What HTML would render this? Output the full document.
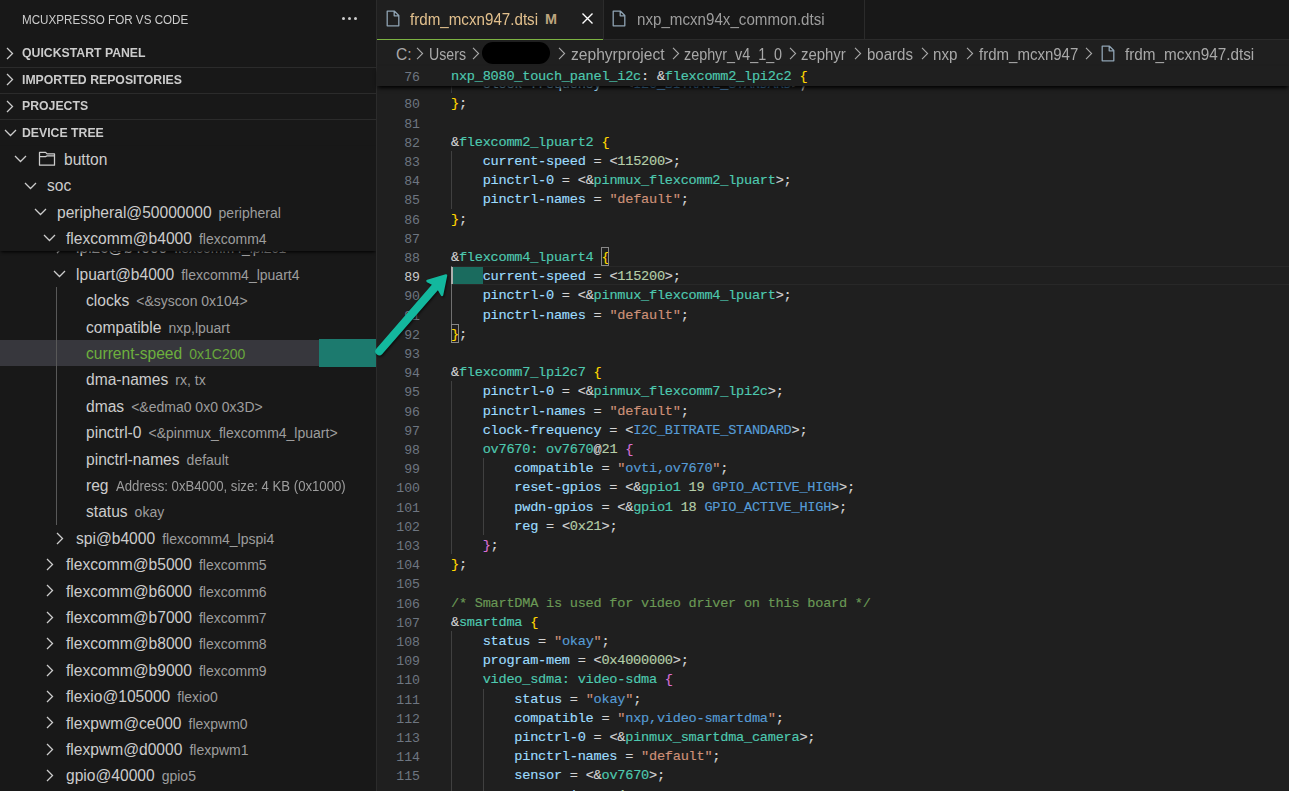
<!DOCTYPE html><html><head><meta charset="utf-8"><style>
html,body{margin:0;padding:0;width:1289px;height:791px;overflow:hidden;background:#1f1f1f;}
body{position:relative;font-family:"Liberation Sans",sans-serif;}
.a{position:absolute;white-space:pre;}
.ui{font-family:"Liberation Sans",sans-serif;}
.mono{font-family:"Liberation Mono",monospace;font-size:13.2px;}
.code{font-size:13.6px;letter-spacing:-0.24px;-webkit-text-stroke:0.15px currentColor;}
</style></head><body>
<div class="a" style="left:0;top:0;width:376px;height:791px;background:#181818;overflow:hidden">
<div class="a ui" style="left:22px;top:12px;font-size:13.2px;color:#cccccc;line-height:16px;transform:scaleX(0.883);transform-origin:0 0">MCUXPRESSO FOR VS CODE</div>
<div class="a" style="left:341.8px;top:16.9px;width:3.4px;height:3.4px;border-radius:50%;background:#cccccc"></div>
<div class="a" style="left:347.7px;top:16.9px;width:3.4px;height:3.4px;border-radius:50%;background:#cccccc"></div>
<div class="a" style="left:353.6px;top:16.9px;width:3.4px;height:3.4px;border-radius:50%;background:#cccccc"></div>
<svg style="position:absolute;left:6.3px;top:46.900000000000006px" width="8" height="13" viewBox="0 0 8 13"><path d="M1 1 L6.5 6.5 L1 12" fill="none" stroke="#cccccc" stroke-width="1.3"/></svg>
<div class="a ui" style="left:22px;top:45.400000000000006px;font-size:13.2px;font-weight:bold;color:#cccccc;line-height:16px;transform:scaleX(0.93);transform-origin:0 0">QUICKSTART PANEL</div>
<div class="a" style="left:0;top:66.6px;width:376px;height:1px;background:#2b2b2b"></div>
<svg style="position:absolute;left:6.3px;top:73.3px" width="8" height="13" viewBox="0 0 8 13"><path d="M1 1 L6.5 6.5 L1 12" fill="none" stroke="#cccccc" stroke-width="1.3"/></svg>
<div class="a ui" style="left:22px;top:71.8px;font-size:13.2px;font-weight:bold;color:#cccccc;line-height:16px;transform:scaleX(0.93);transform-origin:0 0">IMPORTED REPOSITORIES</div>
<div class="a" style="left:0;top:93.0px;width:376px;height:1px;background:#2b2b2b"></div>
<svg style="position:absolute;left:6.3px;top:99.7px" width="8" height="13" viewBox="0 0 8 13"><path d="M1 1 L6.5 6.5 L1 12" fill="none" stroke="#cccccc" stroke-width="1.3"/></svg>
<div class="a ui" style="left:22px;top:98.2px;font-size:13.2px;font-weight:bold;color:#cccccc;line-height:16px;transform:scaleX(0.93);transform-origin:0 0">PROJECTS</div>
<div class="a" style="left:0;top:119.39999999999999px;width:376px;height:1px;background:#2b2b2b"></div>
<svg style="position:absolute;left:3.5px;top:128.6px" width="13" height="8" viewBox="0 0 13 8"><path d="M1 1 L6.5 6.5 L12 1" fill="none" stroke="#cccccc" stroke-width="1.3"/></svg>
<div class="a ui" style="left:22px;top:124.6px;font-size:13.2px;font-weight:bold;color:#cccccc;line-height:16px;transform:scaleX(0.93);transform-origin:0 0">DEVICE TREE</div>
<svg style="position:absolute;left:56px;top:241.1px" width="8" height="13" viewBox="0 0 8 13"><path d="M1 1 L6.5 6.5 L1 12" fill="none" stroke="#cccccc" stroke-width="1.3"/></svg><div class="a ui" style="left:76px;top:235.4px;height:26.4px;line-height:26.4px;font-size:15.6px;color:#cccccc">lpi2c@b4000<span style="font-size:14px;color:#9d9d9d;margin-left:7px">flexcomm4_lpi2c1</span></div>
<svg style="position:absolute;left:53px;top:270.0px" width="13" height="8" viewBox="0 0 13 8"><path d="M1 1 L6.5 6.5 L12 1" fill="none" stroke="#cccccc" stroke-width="1.3"/></svg><div class="a ui" style="left:76px;top:261.8px;height:26.4px;line-height:26.4px;font-size:15.6px;color:#cccccc">lpuart@b4000<span style="font-size:14px;color:#9d9d9d;margin-left:7px">flexcomm4_lpuart4</span></div>
<div class="a ui" style="left:86px;top:288.2px;height:26.4px;line-height:26.4px;font-size:15.6px;color:#cccccc">clocks<span style="font-size:14px;color:#9d9d9d;margin-left:7px">&lt;&amp;syscon 0x104&gt;</span></div>
<div class="a ui" style="left:86px;top:314.6px;height:26.4px;line-height:26.4px;font-size:15.6px;color:#cccccc">compatible<span style="font-size:14px;color:#9d9d9d;margin-left:7px">nxp,lpuart</span></div>
<div class="a" style="left:0;top:340.0px;width:376px;height:26.4px;background:#37373d"></div>
<div class="a ui" style="left:86px;top:341.0px;height:26.4px;line-height:26.4px;font-size:15.6px;color:#6db03e">current-speed<span style="font-size:14px;color:#68a63c;margin-left:7px">0x1C200</span></div>
<div class="a" style="left:319px;top:339.2px;width:57px;height:28px;background:#1c7a6e"></div>
<div class="a ui" style="left:86px;top:367.4px;height:26.4px;line-height:26.4px;font-size:15.6px;color:#cccccc">dma-names<span style="font-size:14px;color:#9d9d9d;margin-left:7px">rx, tx</span></div>
<div class="a ui" style="left:86px;top:393.8px;height:26.4px;line-height:26.4px;font-size:15.6px;color:#cccccc">dmas<span style="font-size:14px;color:#9d9d9d;margin-left:7px">&lt;&amp;edma0 0x0 0x3D&gt;</span></div>
<div class="a ui" style="left:86px;top:420.2px;height:26.4px;line-height:26.4px;font-size:15.6px;color:#cccccc">pinctrl-0<span style="font-size:14px;color:#9d9d9d;margin-left:7px">&lt;&amp;pinmux_flexcomm4_lpuart&gt;</span></div>
<div class="a ui" style="left:86px;top:446.6px;height:26.4px;line-height:26.4px;font-size:15.6px;color:#cccccc">pinctrl-names<span style="font-size:14px;color:#9d9d9d;margin-left:7px">default</span></div>
<div class="a ui" style="left:86px;top:473.0px;height:26.4px;line-height:26.4px;font-size:15.6px;color:#cccccc">reg<span style="font-size:14px;color:#9d9d9d;margin-left:7px;display:inline-block;transform:scaleX(0.94);transform-origin:0 50%">Address: 0xB4000, size: 4 KB (0x1000)</span></div>
<div class="a ui" style="left:86px;top:499.4px;height:26.4px;line-height:26.4px;font-size:15.6px;color:#cccccc">status<span style="font-size:14px;color:#9d9d9d;margin-left:7px">okay</span></div>
<svg style="position:absolute;left:56px;top:531.5px" width="8" height="13" viewBox="0 0 8 13"><path d="M1 1 L6.5 6.5 L1 12" fill="none" stroke="#cccccc" stroke-width="1.3"/></svg><div class="a ui" style="left:76px;top:525.8px;height:26.4px;line-height:26.4px;font-size:15.6px;color:#cccccc">spi@b4000<span style="font-size:14px;color:#9d9d9d;margin-left:7px">flexcomm4_lpspi4</span></div>
<svg style="position:absolute;left:46px;top:557.9000000000001px" width="8" height="13" viewBox="0 0 8 13"><path d="M1 1 L6.5 6.5 L1 12" fill="none" stroke="#cccccc" stroke-width="1.3"/></svg><div class="a ui" style="left:66px;top:552.2px;height:26.4px;line-height:26.4px;font-size:15.6px;color:#cccccc">flexcomm@b5000<span style="font-size:14px;color:#9d9d9d;margin-left:7px">flexcomm5</span></div>
<svg style="position:absolute;left:46px;top:584.3px" width="8" height="13" viewBox="0 0 8 13"><path d="M1 1 L6.5 6.5 L1 12" fill="none" stroke="#cccccc" stroke-width="1.3"/></svg><div class="a ui" style="left:66px;top:578.5999999999999px;height:26.4px;line-height:26.4px;font-size:15.6px;color:#cccccc">flexcomm@b6000<span style="font-size:14px;color:#9d9d9d;margin-left:7px">flexcomm6</span></div>
<svg style="position:absolute;left:46px;top:610.7px" width="8" height="13" viewBox="0 0 8 13"><path d="M1 1 L6.5 6.5 L1 12" fill="none" stroke="#cccccc" stroke-width="1.3"/></svg><div class="a ui" style="left:66px;top:605.0px;height:26.4px;line-height:26.4px;font-size:15.6px;color:#cccccc">flexcomm@b7000<span style="font-size:14px;color:#9d9d9d;margin-left:7px">flexcomm7</span></div>
<svg style="position:absolute;left:46px;top:637.1px" width="8" height="13" viewBox="0 0 8 13"><path d="M1 1 L6.5 6.5 L1 12" fill="none" stroke="#cccccc" stroke-width="1.3"/></svg><div class="a ui" style="left:66px;top:631.4px;height:26.4px;line-height:26.4px;font-size:15.6px;color:#cccccc">flexcomm@b8000<span style="font-size:14px;color:#9d9d9d;margin-left:7px">flexcomm8</span></div>
<svg style="position:absolute;left:46px;top:663.5px" width="8" height="13" viewBox="0 0 8 13"><path d="M1 1 L6.5 6.5 L1 12" fill="none" stroke="#cccccc" stroke-width="1.3"/></svg><div class="a ui" style="left:66px;top:657.8px;height:26.4px;line-height:26.4px;font-size:15.6px;color:#cccccc">flexcomm@b9000<span style="font-size:14px;color:#9d9d9d;margin-left:7px">flexcomm9</span></div>
<svg style="position:absolute;left:46px;top:689.9000000000001px" width="8" height="13" viewBox="0 0 8 13"><path d="M1 1 L6.5 6.5 L1 12" fill="none" stroke="#cccccc" stroke-width="1.3"/></svg><div class="a ui" style="left:66px;top:684.2px;height:26.4px;line-height:26.4px;font-size:15.6px;color:#cccccc">flexio@105000<span style="font-size:14px;color:#9d9d9d;margin-left:7px">flexio0</span></div>
<svg style="position:absolute;left:46px;top:716.3px" width="8" height="13" viewBox="0 0 8 13"><path d="M1 1 L6.5 6.5 L1 12" fill="none" stroke="#cccccc" stroke-width="1.3"/></svg><div class="a ui" style="left:66px;top:710.5999999999999px;height:26.4px;line-height:26.4px;font-size:15.6px;color:#cccccc">flexpwm@ce000<span style="font-size:14px;color:#9d9d9d;margin-left:7px">flexpwm0</span></div>
<svg style="position:absolute;left:46px;top:742.7px" width="8" height="13" viewBox="0 0 8 13"><path d="M1 1 L6.5 6.5 L1 12" fill="none" stroke="#cccccc" stroke-width="1.3"/></svg><div class="a ui" style="left:66px;top:737.0px;height:26.4px;line-height:26.4px;font-size:15.6px;color:#cccccc">flexpwm@d0000<span style="font-size:14px;color:#9d9d9d;margin-left:7px">flexpwm1</span></div>
<svg style="position:absolute;left:46px;top:769.1px" width="8" height="13" viewBox="0 0 8 13"><path d="M1 1 L6.5 6.5 L1 12" fill="none" stroke="#cccccc" stroke-width="1.3"/></svg><div class="a ui" style="left:66px;top:763.4px;height:26.4px;line-height:26.4px;font-size:15.6px;color:#cccccc">gpio@40000<span style="font-size:14px;color:#9d9d9d;margin-left:7px">gpio5</span></div>
<div class="a" style="left:56px;top:287.2px;width:1px;height:237.6px;background:#585858"></div>
<div class="a" style="left:0;top:146px;width:376px;height:104.6px;background:#181818;box-shadow:0 2px 3px -1px #000;overflow:hidden"></div>
<svg style="position:absolute;left:14px;top:155.2px" width="13" height="8" viewBox="0 0 13 8"><path d="M1 1 L6.5 6.5 L12 1" fill="none" stroke="#cccccc" stroke-width="1.3"/></svg><svg style="position:absolute;left:36px;top:150.2px" width="22" height="18" viewBox="36 150.2 22 18"><path d="M39.5 152.6 H45.6 L47.1 154.1 H54.5 V165.39999999999998 H39.5 Z M39.5 156.79999999999998 H45.6 L47.1 156.0 H54.5" fill="none" stroke="#cccccc" stroke-width="1.25" stroke-linejoin="round"/></svg><div class="a ui" style="left:64px;top:147.0px;height:26.4px;line-height:26.4px;font-size:15.6px;color:#cccccc">button</div>
<svg style="position:absolute;left:24px;top:181.6px" width="13" height="8" viewBox="0 0 13 8"><path d="M1 1 L6.5 6.5 L12 1" fill="none" stroke="#cccccc" stroke-width="1.3"/></svg><div class="a ui" style="left:47px;top:173.4px;height:26.4px;line-height:26.4px;font-size:15.6px;color:#cccccc">soc</div>
<svg style="position:absolute;left:34px;top:208.0px" width="13" height="8" viewBox="0 0 13 8"><path d="M1 1 L6.5 6.5 L12 1" fill="none" stroke="#cccccc" stroke-width="1.3"/></svg><div class="a ui" style="left:57px;top:199.8px;height:26.4px;line-height:26.4px;font-size:15.6px;color:#cccccc">peripheral@50000000<span style="font-size:14px;color:#9d9d9d;margin-left:7px">peripheral</span></div>
<svg style="position:absolute;left:43px;top:234.39999999999998px" width="13" height="8" viewBox="0 0 13 8"><path d="M1 1 L6.5 6.5 L12 1" fill="none" stroke="#cccccc" stroke-width="1.3"/></svg><div class="a ui" style="left:66px;top:226.2px;height:26.4px;line-height:26.4px;font-size:15.6px;color:#cccccc">flexcomm@b4000<span style="font-size:14px;color:#9d9d9d;margin-left:7px">flexcomm4</span></div>
</div>
<div class="a" style="left:376px;top:0;width:1px;height:791px;background:#2b2b2b"></div>
<div class="a" style="left:377px;top:0;width:912px;height:39px;background:#181818"></div>
<div class="a" style="left:377px;top:39px;width:912px;height:1px;background:#2b2b2b"></div>
<div class="a" style="left:377px;top:0;width:226px;height:40px;background:#1f1f1f"></div>
<div class="a" style="left:377px;top:39px;width:226px;height:1px;background:#7cb342"></div>
<div class="a" style="left:603px;top:0;width:1px;height:39px;background:#2b2b2b"></div>
<div class="a" style="left:864px;top:0;width:1px;height:39px;background:#2b2b2b"></div>
<svg style="position:absolute;left:386px;top:10px" width="14" height="17" viewBox="0 0 14 17"><path d="M1.2 1.2 H8.5 L12.8 5.5 V15.8 H1.2 Z M8.2 1.2 V5.8 H12.8" fill="none" stroke="#8fa3b3" stroke-width="1.3" stroke-linejoin="round"/></svg>
<div class="a ui" style="left:410px;top:11px;font-size:15.6px;line-height:18px;color:#e2c08d;transform:scaleX(0.972);transform-origin:0 0">frdm_mcxn947.dtsi</div>
<div class="a ui" style="left:545px;top:10px;font-size:14.4px;line-height:18px;font-weight:bold;color:#bda57f">M</div>
<svg style="position:absolute;left:581px;top:12px" width="13" height="13" viewBox="0 0 13 13"><path d="M1.5 1.5 L11.5 11.5 M11.5 1.5 L1.5 11.5" stroke="#ffffff" stroke-width="1.4"/></svg>
<svg style="position:absolute;left:612px;top:10px" width="14" height="17" viewBox="0 0 14 17"><path d="M1.2 1.2 H8.5 L12.8 5.5 V15.8 H1.2 Z M8.2 1.2 V5.8 H12.8" fill="none" stroke="#8fa3b3" stroke-width="1.3" stroke-linejoin="round"/></svg>
<div class="a ui" style="left:637px;top:11px;font-size:15.6px;line-height:18px;color:#9d9d9d;transform:scaleX(0.971);transform-origin:0 0">nxp_mcxn94x_common.dtsi</div>
<div class="a" style="left:377px;top:40px;width:912px;height:26px;background:#1f1f1f"></div>
<div class="a ui" style="left:396.1px;top:46px;font-size:15.6px;line-height:18px;color:#a9a9a9;transform:scaleX(1.0000);transform-origin:0 0">C:</div>
<div class="a ui" style="left:429.1px;top:46px;font-size:15.6px;line-height:18px;color:#a9a9a9;transform:scaleX(0.9083);transform-origin:0 0">Users</div>
<div class="a ui" style="left:570.7px;top:46px;font-size:15.6px;line-height:18px;color:#a9a9a9;transform:scaleX(0.9999);transform-origin:0 0">zephyrproject</div>
<div class="a ui" style="left:683.7px;top:46px;font-size:15.6px;line-height:18px;color:#a9a9a9;transform:scaleX(0.9199);transform-origin:0 0">zephyr_v4_1_0</div>
<div class="a ui" style="left:801px;top:46px;font-size:15.6px;line-height:18px;color:#a9a9a9;transform:scaleX(0.9570);transform-origin:0 0">zephyr</div>
<div class="a ui" style="left:867.4px;top:46px;font-size:15.6px;line-height:18px;color:#a9a9a9;transform:scaleX(0.9646);transform-origin:0 0">boards</div>
<div class="a ui" style="left:933px;top:46px;font-size:15.6px;line-height:18px;color:#a9a9a9;transform:scaleX(0.9739);transform-origin:0 0">nxp</div>
<div class="a ui" style="left:978.6px;top:46px;font-size:15.6px;line-height:18px;color:#a9a9a9;transform:scaleX(0.9628);transform-origin:0 0">frdm_mcxn947</div>
<div class="a ui" style="left:1125px;top:46px;font-size:15.6px;line-height:18px;color:#a9a9a9;transform:scaleX(0.9808);transform-origin:0 0">frdm_mcxn947.dtsi</div>
<svg style="position:absolute;left:415.5px;top:47px" width="8" height="13" viewBox="0 0 8 13"><path d="M1 0.8 L6.6 6.5 L1 12.2" fill="none" stroke="#a9a9a9" stroke-width="1.1"/></svg>
<svg style="position:absolute;left:472px;top:47px" width="8" height="13" viewBox="0 0 8 13"><path d="M1 0.8 L6.6 6.5 L1 12.2" fill="none" stroke="#a9a9a9" stroke-width="1.1"/></svg>
<svg style="position:absolute;left:557.5px;top:47px" width="8" height="13" viewBox="0 0 8 13"><path d="M1 0.8 L6.6 6.5 L1 12.2" fill="none" stroke="#a9a9a9" stroke-width="1.1"/></svg>
<svg style="position:absolute;left:671.7px;top:47px" width="8" height="13" viewBox="0 0 8 13"><path d="M1 0.8 L6.6 6.5 L1 12.2" fill="none" stroke="#a9a9a9" stroke-width="1.1"/></svg>
<svg style="position:absolute;left:789px;top:47px" width="8" height="13" viewBox="0 0 8 13"><path d="M1 0.8 L6.6 6.5 L1 12.2" fill="none" stroke="#a9a9a9" stroke-width="1.1"/></svg>
<svg style="position:absolute;left:853.8px;top:47px" width="8" height="13" viewBox="0 0 8 13"><path d="M1 0.8 L6.6 6.5 L1 12.2" fill="none" stroke="#a9a9a9" stroke-width="1.1"/></svg>
<svg style="position:absolute;left:920.8px;top:47px" width="8" height="13" viewBox="0 0 8 13"><path d="M1 0.8 L6.6 6.5 L1 12.2" fill="none" stroke="#a9a9a9" stroke-width="1.1"/></svg>
<svg style="position:absolute;left:965.5px;top:47px" width="8" height="13" viewBox="0 0 8 13"><path d="M1 0.8 L6.6 6.5 L1 12.2" fill="none" stroke="#a9a9a9" stroke-width="1.1"/></svg>
<svg style="position:absolute;left:1085px;top:47px" width="8" height="13" viewBox="0 0 8 13"><path d="M1 0.8 L6.6 6.5 L1 12.2" fill="none" stroke="#a9a9a9" stroke-width="1.1"/></svg>
<div class="a" style="left:482px;top:42px;width:68px;height:22px;border-radius:11px;background:#000"></div>
<svg style="position:absolute;left:1101px;top:45px" width="14" height="17" viewBox="0 0 14 17"><path d="M1.2 1.2 H8.5 L12.8 5.5 V15.8 H1.2 Z M8.2 1.2 V5.8 H12.8" fill="none" stroke="#8fa3b3" stroke-width="1.3" stroke-linejoin="round"/></svg>
<div class="a" style="left:451px;top:266.2px;width:838px;height:17.2px;border-top:1px solid #282828;border-bottom:1px solid #282828"></div>
<div class="a" style="left:451px;top:74.2px;width:1px;height:19.2px;background:#404040"></div>
<div class="a" style="left:451px;top:151.0px;width:1px;height:57.599999999999994px;background:#404040"></div>
<div class="a" style="left:451px;top:266.2px;width:1px;height:57.599999999999994px;background:#707070"></div>
<div class="a" style="left:451px;top:381.4px;width:1px;height:172.79999999999998px;background:#404040"></div>
<div class="a" style="left:483px;top:458.20000000000005px;width:1px;height:76.8px;background:#404040"></div>
<div class="a" style="left:451px;top:631.0px;width:1px;height:172.79999999999998px;background:#404040"></div>
<div class="a" style="left:483px;top:688.5999999999999px;width:1px;height:115.19999999999999px;background:#404040"></div>
<div class="a mono" style="left:380px;width:40px;text-align:right;top:95.4px;height:19.2px;line-height:19.2px;color:#6e7681">80</div>
<div class="a mono code" style="left:451px;top:94.4px;height:19.2px;line-height:19.2px;color:#d4d4d4"><span style="color:#ffd700">}</span><span style="color:#d4d4d4">;</span></div>
<div class="a mono" style="left:380px;width:40px;text-align:right;top:114.60000000000001px;height:19.2px;line-height:19.2px;color:#6e7681">81</div>
<div class="a mono" style="left:380px;width:40px;text-align:right;top:133.8px;height:19.2px;line-height:19.2px;color:#6e7681">82</div>
<div class="a mono code" style="left:451px;top:132.8px;height:19.2px;line-height:19.2px;color:#d4d4d4"><span style="color:#d4d4d4">&amp;</span><span style="color:#4ec9b0">flexcomm2_lpuart2</span><span style="color:#d4d4d4"> </span><span style="color:#ffd700">{</span></div>
<div class="a mono" style="left:380px;width:40px;text-align:right;top:153.0px;height:19.2px;line-height:19.2px;color:#6e7681">83</div>
<div class="a mono code" style="left:451px;top:152.0px;height:19.2px;line-height:19.2px;color:#d4d4d4">    <span style="color:#9cdcfe">current-speed</span><span style="color:#d4d4d4"> </span><span style="color:#d4d4d4">=</span><span style="color:#d4d4d4"> </span><span style="color:#d4d4d4">&lt;</span><span style="color:#b5cea8">115200</span><span style="color:#d4d4d4">&gt;</span><span style="color:#d4d4d4">;</span></div>
<div class="a mono" style="left:380px;width:40px;text-align:right;top:172.2px;height:19.2px;line-height:19.2px;color:#6e7681">84</div>
<div class="a mono code" style="left:451px;top:171.2px;height:19.2px;line-height:19.2px;color:#d4d4d4">    <span style="color:#9cdcfe">pinctrl-0</span><span style="color:#d4d4d4"> </span><span style="color:#d4d4d4">=</span><span style="color:#d4d4d4"> </span><span style="color:#d4d4d4">&lt;</span><span style="color:#d4d4d4">&amp;</span><span style="color:#4ec9b0">pinmux_flexcomm2_lpuart</span><span style="color:#d4d4d4">&gt;</span><span style="color:#d4d4d4">;</span></div>
<div class="a mono" style="left:380px;width:40px;text-align:right;top:191.4px;height:19.2px;line-height:19.2px;color:#6e7681">85</div>
<div class="a mono code" style="left:451px;top:190.4px;height:19.2px;line-height:19.2px;color:#d4d4d4">    <span style="color:#9cdcfe">pinctrl-names</span><span style="color:#d4d4d4"> </span><span style="color:#d4d4d4">=</span><span style="color:#d4d4d4"> </span><span style="color:#ce9178">&quot;</span><span style="color:#ce9178">default</span><span style="color:#ce9178">&quot;</span><span style="color:#d4d4d4">;</span></div>
<div class="a mono" style="left:380px;width:40px;text-align:right;top:210.6px;height:19.2px;line-height:19.2px;color:#6e7681">86</div>
<div class="a mono code" style="left:451px;top:209.6px;height:19.2px;line-height:19.2px;color:#d4d4d4"><span style="color:#ffd700">}</span><span style="color:#d4d4d4">;</span></div>
<div class="a mono" style="left:380px;width:40px;text-align:right;top:229.8px;height:19.2px;line-height:19.2px;color:#6e7681">87</div>
<div class="a mono" style="left:380px;width:40px;text-align:right;top:249.0px;height:19.2px;line-height:19.2px;color:#6e7681">88</div>
<div class="a mono code" style="left:451px;top:248.0px;height:19.2px;line-height:19.2px;color:#d4d4d4"><span style="color:#d4d4d4">&amp;</span><span style="color:#4ec9b0">flexcomm4_lpuart4</span><span style="color:#d4d4d4"> </span><span style="color:#ffd700">{</span></div>
<div class="a mono" style="left:380px;width:40px;text-align:right;top:268.2px;height:19.2px;line-height:19.2px;color:#cccccc">89</div>
<div class="a mono code" style="left:451px;top:267.2px;height:19.2px;line-height:19.2px;color:#d4d4d4">    <span style="color:#9cdcfe">current-speed</span><span style="color:#d4d4d4"> </span><span style="color:#d4d4d4">=</span><span style="color:#d4d4d4"> </span><span style="color:#d4d4d4">&lt;</span><span style="color:#b5cea8">115200</span><span style="color:#d4d4d4">&gt;</span><span style="color:#d4d4d4">;</span></div>
<div class="a mono" style="left:380px;width:40px;text-align:right;top:287.4px;height:19.2px;line-height:19.2px;color:#6e7681">90</div>
<div class="a mono code" style="left:451px;top:286.4px;height:19.2px;line-height:19.2px;color:#d4d4d4">    <span style="color:#9cdcfe">pinctrl-0</span><span style="color:#d4d4d4"> </span><span style="color:#d4d4d4">=</span><span style="color:#d4d4d4"> </span><span style="color:#d4d4d4">&lt;</span><span style="color:#d4d4d4">&amp;</span><span style="color:#4ec9b0">pinmux_flexcomm4_lpuart</span><span style="color:#d4d4d4">&gt;</span><span style="color:#d4d4d4">;</span></div>
<div class="a mono" style="left:380px;width:40px;text-align:right;top:306.6px;height:19.2px;line-height:19.2px;color:#6e7681">91</div>
<div class="a mono code" style="left:451px;top:305.6px;height:19.2px;line-height:19.2px;color:#d4d4d4">    <span style="color:#9cdcfe">pinctrl-names</span><span style="color:#d4d4d4"> </span><span style="color:#d4d4d4">=</span><span style="color:#d4d4d4"> </span><span style="color:#ce9178">&quot;</span><span style="color:#ce9178">default</span><span style="color:#ce9178">&quot;</span><span style="color:#d4d4d4">;</span></div>
<div class="a mono" style="left:380px;width:40px;text-align:right;top:325.79999999999995px;height:19.2px;line-height:19.2px;color:#6e7681">92</div>
<div class="a mono code" style="left:451px;top:324.79999999999995px;height:19.2px;line-height:19.2px;color:#d4d4d4"><span style="color:#ffd700">}</span><span style="color:#d4d4d4">;</span></div>
<div class="a mono" style="left:380px;width:40px;text-align:right;top:345.0px;height:19.2px;line-height:19.2px;color:#6e7681">93</div>
<div class="a mono" style="left:380px;width:40px;text-align:right;top:364.20000000000005px;height:19.2px;line-height:19.2px;color:#6e7681">94</div>
<div class="a mono code" style="left:451px;top:363.20000000000005px;height:19.2px;line-height:19.2px;color:#d4d4d4"><span style="color:#d4d4d4">&amp;</span><span style="color:#4ec9b0">flexcomm7_lpi2c7</span><span style="color:#d4d4d4"> </span><span style="color:#ffd700">{</span></div>
<div class="a mono" style="left:380px;width:40px;text-align:right;top:383.4px;height:19.2px;line-height:19.2px;color:#6e7681">95</div>
<div class="a mono code" style="left:451px;top:382.4px;height:19.2px;line-height:19.2px;color:#d4d4d4">    <span style="color:#9cdcfe">pinctrl-0</span><span style="color:#d4d4d4"> </span><span style="color:#d4d4d4">=</span><span style="color:#d4d4d4"> </span><span style="color:#d4d4d4">&lt;</span><span style="color:#d4d4d4">&amp;</span><span style="color:#4ec9b0">pinmux_flexcomm7_lpi2c</span><span style="color:#d4d4d4">&gt;</span><span style="color:#d4d4d4">;</span></div>
<div class="a mono" style="left:380px;width:40px;text-align:right;top:402.6px;height:19.2px;line-height:19.2px;color:#6e7681">96</div>
<div class="a mono code" style="left:451px;top:401.6px;height:19.2px;line-height:19.2px;color:#d4d4d4">    <span style="color:#9cdcfe">pinctrl-names</span><span style="color:#d4d4d4"> </span><span style="color:#d4d4d4">=</span><span style="color:#d4d4d4"> </span><span style="color:#ce9178">&quot;</span><span style="color:#ce9178">default</span><span style="color:#ce9178">&quot;</span><span style="color:#d4d4d4">;</span></div>
<div class="a mono" style="left:380px;width:40px;text-align:right;top:421.79999999999995px;height:19.2px;line-height:19.2px;color:#6e7681">97</div>
<div class="a mono code" style="left:451px;top:420.79999999999995px;height:19.2px;line-height:19.2px;color:#d4d4d4">    <span style="color:#9cdcfe">clock-frequency</span><span style="color:#d4d4d4"> </span><span style="color:#d4d4d4">=</span><span style="color:#d4d4d4"> </span><span style="color:#d4d4d4">&lt;</span><span style="color:#569cd6">I2C_BITRATE_STANDARD</span><span style="color:#d4d4d4">&gt;</span><span style="color:#d4d4d4">;</span></div>
<div class="a mono" style="left:380px;width:40px;text-align:right;top:441.0px;height:19.2px;line-height:19.2px;color:#6e7681">98</div>
<div class="a mono code" style="left:451px;top:440.0px;height:19.2px;line-height:19.2px;color:#d4d4d4">    <span style="color:#4ec9b0">ov7670</span><span style="color:#4ec9b0">:</span><span style="color:#d4d4d4"> </span><span style="color:#4ec9b0">ov7670</span><span style="color:#d4d4d4">@</span><span style="color:#b5cea8">21</span><span style="color:#d4d4d4"> </span><span style="color:#da70d6">{</span></div>
<div class="a mono" style="left:380px;width:40px;text-align:right;top:460.20000000000005px;height:19.2px;line-height:19.2px;color:#6e7681">99</div>
<div class="a mono code" style="left:451px;top:459.20000000000005px;height:19.2px;line-height:19.2px;color:#d4d4d4">        <span style="color:#9cdcfe">compatible</span><span style="color:#d4d4d4"> </span><span style="color:#d4d4d4">=</span><span style="color:#d4d4d4"> </span><span style="color:#ce9178">&quot;</span><span style="color:#569cd6">ovti,ov7670</span><span style="color:#ce9178">&quot;</span><span style="color:#d4d4d4">;</span></div>
<div class="a mono" style="left:380px;width:40px;text-align:right;top:479.4px;height:19.2px;line-height:19.2px;color:#6e7681">100</div>
<div class="a mono code" style="left:451px;top:478.4px;height:19.2px;line-height:19.2px;color:#d4d4d4">        <span style="color:#9cdcfe">reset-gpios</span><span style="color:#d4d4d4"> </span><span style="color:#d4d4d4">=</span><span style="color:#d4d4d4"> </span><span style="color:#d4d4d4">&lt;</span><span style="color:#d4d4d4">&amp;</span><span style="color:#4ec9b0">gpio1</span><span style="color:#d4d4d4"> </span><span style="color:#b5cea8">19</span><span style="color:#d4d4d4"> </span><span style="color:#569cd6">GPIO_ACTIVE_HIGH</span><span style="color:#d4d4d4">&gt;</span><span style="color:#d4d4d4">;</span></div>
<div class="a mono" style="left:380px;width:40px;text-align:right;top:498.6px;height:19.2px;line-height:19.2px;color:#6e7681">101</div>
<div class="a mono code" style="left:451px;top:497.6px;height:19.2px;line-height:19.2px;color:#d4d4d4">        <span style="color:#9cdcfe">pwdn-gpios</span><span style="color:#d4d4d4"> </span><span style="color:#d4d4d4">=</span><span style="color:#d4d4d4"> </span><span style="color:#d4d4d4">&lt;</span><span style="color:#d4d4d4">&amp;</span><span style="color:#4ec9b0">gpio1</span><span style="color:#d4d4d4"> </span><span style="color:#b5cea8">18</span><span style="color:#d4d4d4"> </span><span style="color:#569cd6">GPIO_ACTIVE_HIGH</span><span style="color:#d4d4d4">&gt;</span><span style="color:#d4d4d4">;</span></div>
<div class="a mono" style="left:380px;width:40px;text-align:right;top:517.8px;height:19.2px;line-height:19.2px;color:#6e7681">102</div>
<div class="a mono code" style="left:451px;top:516.8px;height:19.2px;line-height:19.2px;color:#d4d4d4">        <span style="color:#9cdcfe">reg</span><span style="color:#d4d4d4"> </span><span style="color:#d4d4d4">=</span><span style="color:#d4d4d4"> </span><span style="color:#d4d4d4">&lt;</span><span style="color:#b5cea8">0x21</span><span style="color:#d4d4d4">&gt;</span><span style="color:#d4d4d4">;</span></div>
<div class="a mono" style="left:380px;width:40px;text-align:right;top:537.0px;height:19.2px;line-height:19.2px;color:#6e7681">103</div>
<div class="a mono code" style="left:451px;top:536.0px;height:19.2px;line-height:19.2px;color:#d4d4d4">    <span style="color:#da70d6">}</span><span style="color:#d4d4d4">;</span></div>
<div class="a mono" style="left:380px;width:40px;text-align:right;top:556.1999999999999px;height:19.2px;line-height:19.2px;color:#6e7681">104</div>
<div class="a mono code" style="left:451px;top:555.1999999999999px;height:19.2px;line-height:19.2px;color:#d4d4d4"><span style="color:#ffd700">}</span><span style="color:#d4d4d4">;</span></div>
<div class="a mono" style="left:380px;width:40px;text-align:right;top:575.4px;height:19.2px;line-height:19.2px;color:#6e7681">105</div>
<div class="a mono" style="left:380px;width:40px;text-align:right;top:594.6px;height:19.2px;line-height:19.2px;color:#6e7681">106</div>
<div class="a mono code" style="left:451px;top:593.6px;height:19.2px;line-height:19.2px;color:#d4d4d4"><span style="color:#6a9955">/* SmartDMA is used for video driver on this board */</span></div>
<div class="a mono" style="left:380px;width:40px;text-align:right;top:613.8px;height:19.2px;line-height:19.2px;color:#6e7681">107</div>
<div class="a mono code" style="left:451px;top:612.8px;height:19.2px;line-height:19.2px;color:#d4d4d4"><span style="color:#d4d4d4">&amp;</span><span style="color:#4ec9b0">smartdma</span><span style="color:#d4d4d4"> </span><span style="color:#ffd700">{</span></div>
<div class="a mono" style="left:380px;width:40px;text-align:right;top:633.0px;height:19.2px;line-height:19.2px;color:#6e7681">108</div>
<div class="a mono code" style="left:451px;top:632.0px;height:19.2px;line-height:19.2px;color:#d4d4d4">    <span style="color:#9cdcfe">status</span><span style="color:#d4d4d4"> </span><span style="color:#d4d4d4">=</span><span style="color:#d4d4d4"> </span><span style="color:#ce9178">&quot;</span><span style="color:#569cd6">okay</span><span style="color:#ce9178">&quot;</span><span style="color:#d4d4d4">;</span></div>
<div class="a mono" style="left:380px;width:40px;text-align:right;top:652.1999999999999px;height:19.2px;line-height:19.2px;color:#6e7681">109</div>
<div class="a mono code" style="left:451px;top:651.1999999999999px;height:19.2px;line-height:19.2px;color:#d4d4d4">    <span style="color:#9cdcfe">program-mem</span><span style="color:#d4d4d4"> </span><span style="color:#d4d4d4">=</span><span style="color:#d4d4d4"> </span><span style="color:#d4d4d4">&lt;</span><span style="color:#b5cea8">0x4000000</span><span style="color:#d4d4d4">&gt;</span><span style="color:#d4d4d4">;</span></div>
<div class="a mono" style="left:380px;width:40px;text-align:right;top:671.4px;height:19.2px;line-height:19.2px;color:#6e7681">110</div>
<div class="a mono code" style="left:451px;top:670.4px;height:19.2px;line-height:19.2px;color:#d4d4d4">    <span style="color:#4ec9b0">video_sdma</span><span style="color:#4ec9b0">:</span><span style="color:#d4d4d4"> </span><span style="color:#4ec9b0">video-sdma</span><span style="color:#d4d4d4"> </span><span style="color:#da70d6">{</span></div>
<div class="a mono" style="left:380px;width:40px;text-align:right;top:690.5999999999999px;height:19.2px;line-height:19.2px;color:#6e7681">111</div>
<div class="a mono code" style="left:451px;top:689.5999999999999px;height:19.2px;line-height:19.2px;color:#d4d4d4">        <span style="color:#9cdcfe">status</span><span style="color:#d4d4d4"> </span><span style="color:#d4d4d4">=</span><span style="color:#d4d4d4"> </span><span style="color:#ce9178">&quot;</span><span style="color:#569cd6">okay</span><span style="color:#ce9178">&quot;</span><span style="color:#d4d4d4">;</span></div>
<div class="a mono" style="left:380px;width:40px;text-align:right;top:709.8px;height:19.2px;line-height:19.2px;color:#6e7681">112</div>
<div class="a mono code" style="left:451px;top:708.8px;height:19.2px;line-height:19.2px;color:#d4d4d4">        <span style="color:#9cdcfe">compatible</span><span style="color:#d4d4d4"> </span><span style="color:#d4d4d4">=</span><span style="color:#d4d4d4"> </span><span style="color:#ce9178">&quot;</span><span style="color:#569cd6">nxp,video-smartdma</span><span style="color:#ce9178">&quot;</span><span style="color:#d4d4d4">;</span></div>
<div class="a mono" style="left:380px;width:40px;text-align:right;top:729.0px;height:19.2px;line-height:19.2px;color:#6e7681">113</div>
<div class="a mono code" style="left:451px;top:728.0px;height:19.2px;line-height:19.2px;color:#d4d4d4">        <span style="color:#9cdcfe">pinctrl-0</span><span style="color:#d4d4d4"> </span><span style="color:#d4d4d4">=</span><span style="color:#d4d4d4"> </span><span style="color:#d4d4d4">&lt;</span><span style="color:#d4d4d4">&amp;</span><span style="color:#4ec9b0">pinmux_smartdma_camera</span><span style="color:#d4d4d4">&gt;</span><span style="color:#d4d4d4">;</span></div>
<div class="a mono" style="left:380px;width:40px;text-align:right;top:748.1999999999999px;height:19.2px;line-height:19.2px;color:#6e7681">114</div>
<div class="a mono code" style="left:451px;top:747.1999999999999px;height:19.2px;line-height:19.2px;color:#d4d4d4">        <span style="color:#9cdcfe">pinctrl-names</span><span style="color:#d4d4d4"> </span><span style="color:#d4d4d4">=</span><span style="color:#d4d4d4"> </span><span style="color:#ce9178">&quot;</span><span style="color:#ce9178">default</span><span style="color:#ce9178">&quot;</span><span style="color:#d4d4d4">;</span></div>
<div class="a mono" style="left:380px;width:40px;text-align:right;top:767.4px;height:19.2px;line-height:19.2px;color:#6e7681">115</div>
<div class="a mono code" style="left:451px;top:766.4px;height:19.2px;line-height:19.2px;color:#d4d4d4">        <span style="color:#9cdcfe">sensor</span><span style="color:#d4d4d4"> </span><span style="color:#d4d4d4">=</span><span style="color:#d4d4d4"> </span><span style="color:#d4d4d4">&lt;</span><span style="color:#d4d4d4">&amp;</span><span style="color:#4ec9b0">ov7670</span><span style="color:#d4d4d4">&gt;</span><span style="color:#d4d4d4">;</span></div>
<div class="a mono" style="left:380px;width:40px;text-align:right;top:786.5999999999999px;height:19.2px;line-height:19.2px;color:#6e7681">116</div>
<div class="a mono code" style="left:451px;top:785.5999999999999px;height:19.2px;line-height:19.2px;color:#d4d4d4">        <span style="color:#9cdcfe">vsync-pin</span><span style="color:#d4d4d4"> </span><span style="color:#d4d4d4">=</span><span style="color:#d4d4d4"> </span><span style="color:#d4d4d4">&lt;</span><span style="color:#b5cea8">4</span><span style="color:#d4d4d4">&gt;</span><span style="color:#d4d4d4">;</span></div>
<div class="a mono code" style="left:451px;top:75.2px;height:19.2px;line-height:19.2px;color:#d4d4d4">    <span style="color:#9cdcfe">clock-frequency</span><span style="color:#d4d4d4"> </span><span style="color:#d4d4d4">=</span><span style="color:#d4d4d4"> </span><span style="color:#d4d4d4">&lt;</span><span style="color:#569cd6">I2C_BITRATE_STANDARD</span><span style="color:#d4d4d4">&gt;</span><span style="color:#d4d4d4">;</span></div>
<div class="a" style="left:600.98px;top:247.0px;width:8.42px;height:18.8px;border:1px solid #888;box-sizing:border-box"></div>
<div class="a" style="left:450.5px;top:323.79999999999995px;width:8.42px;height:18.8px;border:1px solid #888;box-sizing:border-box"></div>
<div class="a" style="left:452px;top:267.2px;width:31px;height:17.2px;background:#1a6b5e"></div>
<div class="a" style="left:451px;top:267.2px;width:2px;height:17.2px;background:#aeafad"></div>
<div class="a" style="left:377px;top:66.4px;width:912px;height:19.2px;background:#1f1f1f;box-shadow:0 3px 4px -1px #000"></div>
<div class="a mono" style="left:380px;width:40px;text-align:right;top:68.4px;height:19.2px;line-height:19.2px;color:#6e7681">76</div>
<div class="a mono code" style="left:451px;top:67.4px;height:19.2px;line-height:19.2px;color:#d4d4d4"><span style="color:#4ec9b0">nxp_8080_touch_panel_i2c</span><span style="color:#d4d4d4">:</span><span style="color:#d4d4d4"> </span><span style="color:#d4d4d4">&amp;</span><span style="color:#4ec9b0">flexcomm2_lpi2c2</span><span style="color:#d4d4d4"> </span><span style="color:#ffd700">{</span></div>
<svg style="position:absolute;left:365px;top:260px" width="100" height="110" viewBox="365 260 100 110"><defs><filter id="sh" x="-20%" y="-20%" width="140%" height="140%"><feGaussianBlur stdDeviation="1.2"/></filter></defs><g opacity="0.55" filter="url(#sh)" transform="translate(1,1.5)"><line x1="379.3" y1="351.3" x2="437" y2="285" stroke="#000" stroke-width="8" stroke-linecap="round"/><path d="M446 275.5 L427.5 281 Q433 283.5 436.5 286.5 Q439.5 290 442 295 Z" fill="#000" stroke="#000" stroke-width="2.5" stroke-linejoin="round"/></g><line x1="379.3" y1="351.3" x2="437" y2="285" stroke="#13b89e" stroke-width="8" stroke-linecap="round"/><path d="M446 275.5 L427.5 281 Q433 283.5 436.5 286.5 Q439.5 290 442 295 Z" fill="#13b89e" stroke="#13b89e" stroke-width="2.5" stroke-linejoin="round"/></svg>
</body></html>
